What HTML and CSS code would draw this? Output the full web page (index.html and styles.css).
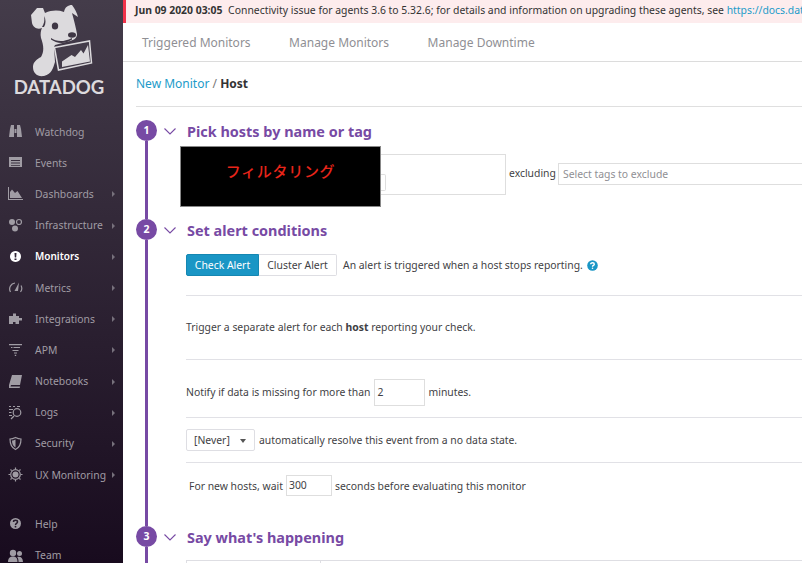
FILE: index.html
```html
<!DOCTYPE html>
<html lang="en">
<head>
    <meta charset="UTF-8">
    <title>New Monitor - Host</title>
    <link rel="stylesheet" href="styles.css">
</head>
<body>
    <aside class="sidebar">
        <div class="logo">
            <svg class="logo-dog" viewBox="0 0 130 78" width="130" height="78">
                <path class="dog" d="M31 15 L37 8 L43 8 L45 13 C52 10 58 10 64 12 C65 7 68 5 72 5 C75 9 77 13 78 17 L72 13 C74 20 76 28 77 34 C77 38 74 40 70 41 L55 45 L54 47 L55 62 C53 68 52 74 44 76 C37 77 33 73 33 67 C33 62 37 59 41 57 C44 52 44 46 41 38 C40 34 41 30 42 28 C37 30 33 27 32 23 Z"/>
                <path class="cut" d="M44 16 C45 20 44 24 42 27 L44 27 C46 24 46 19 44 16 Z"/>
                <path class="cut" d="M51 38 C56 41 62 43 72 38 L72 39.500 C64 45 56 43 51 39.500 Z"/>
                <ellipse class="cut" cx="55" cy="26" rx="3.200" ry="3.600"/>
                <ellipse class="cut" cx="72" cy="35" rx="4" ry="2.800"/>
                <path class="frame" d="M54.500 47.500 L89.500 41 L91.500 63 L58.500 70 Z"/>
                <path class="dog" d="M62 61.500 L71.500 55 L75 57 L81 50 L83.500 53.500 L88 45 L90 61.500 L62 67 Z"/>
            </svg>
            <div class="logo-name">DATADOG</div>
        </div>
        <nav class="nav">
            <a class="nav-item">
                <svg class="nav-icon" viewBox="0 0 15 15"><path d="M1 13 L2 5 L3 1 H6 V13 Z M9 13 V1 H12 L13 5 L14 13 Z M6.500 5 H8.500 V9 H6.500 Z"/></svg>
                <span>Watchdog</span>
            </a>
            <a class="nav-item">
                <svg class="nav-icon" viewBox="0 0 15 15"><path fill-rule="evenodd" d="M1 2 H14 V12 H1 Z M3 5 V6 H12 V5 Z M3 7.500 V8.500 H12 V7.500 Z M3 10 V10.800 H12 V10 Z"/></svg>
                <span>Events</span>
            </a>
            <a class="nav-item has-sub">
                <svg class="nav-icon" viewBox="0 0 15 15"><path d="M1 1 V13 H15 V14 H0 V1 Z M2 12 V6 L4 3.500 L7 7 L9.500 5 L14 12 Z"/></svg>
                <span>Dashboards</span>
            </a>
            <a class="nav-item has-sub">
                <svg class="nav-icon" viewBox="0 0 15 15"><circle cx="4" cy="4" r="3"/><circle cx="7" cy="10.500" r="3"/><circle class="ring" cx="11" cy="4" r="2.500"/></svg>
                <span>Infrastructure</span>
            </a>
            <a class="nav-item has-sub active">
                <svg class="nav-icon" viewBox="0 0 15 15"><path fill-rule="evenodd" d="M7.500 2 A5.500 5.500 0 1 1 7.499 2 Z M6.500 4 L6.800 8.500 H8.200 L8.500 4 Z M6.500 9.500 V11 H8.500 V9.500 Z"/></svg>
                <span>Monitors</span>
            </a>
            <a class="nav-item has-sub">
                <svg class="nav-icon" viewBox="0 0 15 15"><path class="line" d="M2.500 12 A6 6 0 0 1 7 3 M13 5.500 A6 6 0 0 1 12.500 12"/><path d="M11 2.500 L10 11 H6.500 Z"/></svg>
                <span>Metrics</span>
            </a>
            <a class="nav-item has-sub">
                <svg class="nav-icon" viewBox="0 0 15 15"><path d="M1 5 H5 V2.500 H8 V5 H11 V7 H14 V9.500 H11 V13 H7.500 V11 H5 V13 H1 Z"/></svg>
                <span>Integrations</span>
            </a>
            <a class="nav-item has-sub">
                <svg class="nav-icon" viewBox="0 0 15 15"><path d="M1 2 H14 V3.200 H1 Z M3 5 H4.500 V6 H3 Z M5.500 5 H12 V6 H5.500 Z M4.500 8 H10.500 V9 H4.500 Z M6 10.500 H9 V11.500 H6 Z M6.800 12.800 H8.200 V14 H6.800 Z"/></svg>
                <span>APM</span>
            </a>
            <a class="nav-item has-sub">
                <svg class="nav-icon" viewBox="0 0 15 15"><path d="M4 1 H14 L12 11 H3 L2.500 12.500 H12 L11.700 14 H1 L1 11 Z"/></svg>
                <span>Notebooks</span>
            </a>
            <a class="nav-item has-sub">
                <svg class="nav-icon" viewBox="0 0 15 15"><path class="line" d="M1 1.500 H3 M5 1.500 H7 M9 1.500 H12 M1 4.500 H5 M1 7.500 H3.500 M1 10.500 H4"/><circle class="ring" cx="9" cy="7.500" r="3.800"/><path class="line" d="M6 11 L3 14"/></svg>
                <span>Logs</span>
            </a>
            <a class="nav-item has-sub">
                <svg class="nav-icon" viewBox="0 0 15 15"><path class="line" d="M7.500 1.500 C9.500 2.500 11 3 13 3 C13 8 12 11.500 7.500 13.500 C3 11.500 2 8 2 3 C4 3 5.500 2.500 7.500 1.500 Z"/><path d="M7.500 3.500 V11.500 C5 10 4 8 4 4.500 C5.500 4.500 6.500 4 7.500 3.500 Z"/></svg>
                <span>Security</span>
            </a>
            <a class="nav-item has-sub">
                <svg class="nav-icon" viewBox="0 0 15 15"><circle cx="7.500" cy="7.500" r="3"/><circle class="ring" cx="7.500" cy="7.500" r="4.800"/><path class="line" d="M7.500 0.500 V2 M7.500 13 V14.500 M0.500 7.500 H2 M13 7.500 H14.500 M2.500 2.500 L3.700 3.700 M11.300 11.300 L12.500 12.500 M12.500 2.500 L11.300 3.700 M3.700 11.300 L2.500 12.500"/></svg>
                <span>UX Monitoring</span>
            </a>
        </nav>
        <nav class="nav nav-bottom">
            <a class="nav-item">
                <svg class="nav-icon" viewBox="0 0 15 15"><circle cx="7.500" cy="7.500" r="5.500"/><path class="hole" d="M5.500 6 C5.500 3.800 9.500 3.800 9.500 6 C9.500 7.500 7.500 7.300 7.500 9"/><circle class="dot" cx="7.500" cy="10.700" r="0.900"/></svg>
                <span>Help</span>
            </a>
            <a class="nav-item">
                <svg class="nav-icon" viewBox="0 0 15 15"><circle cx="5" cy="5" r="3.200"/><path d="M0 14 C0 10 2 8.500 5 8.500 C8 8.500 9.500 10 9.500 14 Z"/><circle cx="11.500" cy="5.500" r="2.500"/><path d="M10.500 14 C10.500 11.500 10 10 9 9 C12 7.800 15 9.500 15 14 Z"/></svg>
                <span>Team</span>
            </a>
        </nav>
    </aside>

    <main class="main">
        <div class="banner">
            <b>Jun 09 2020 03:05</b>
            Connectivity issue for agents 3.6 to 5.32.6; for details and information on upgrading these agents, see
            <a>https://docs.datadoghq.com/agent/</a>
        </div>

        <div class="tabs">
            <a>Triggered Monitors</a>
            <a>Manage Monitors</a>
            <a>Manage Downtime</a>
        </div>

        <div class="crumbs">
            <a>New Monitor</a> <span class="slash">/</span> <b>Host</b>
        </div>

        <section class="step step-pick">
            <div class="rail"><div class="num">1</div></div>
            <div class="step-main">
                <h2 class="step-head">
                    <svg class="chevron" viewBox="0 0 12 7"><path d="M0.500 0.500 L6 6 L11.500 0.500"/></svg>
                    Pick hosts by name or tag
                </h2>
                <div class="pick-row">
                    <div class="pick-box"><span class="pick-tag"></span></div>
                    <span class="excluding">excluding</span>
                    <div class="exclude-input">Select tags to exclude</div>
                </div>
            </div>
        </section>

        <section class="step">
            <div class="rail"><div class="num">2</div></div>
            <div class="step-main">
                <h2 class="step-head">
                    <svg class="chevron" viewBox="0 0 12 7"><path d="M0.500 0.500 L6 6 L11.500 0.500"/></svg>
                    Set alert conditions
                </h2>
                <div class="row row-alert">
                    <div class="btn-group">
                        <button class="btn btn-on">Check Alert</button>
                        <button class="btn">Cluster Alert</button>
                    </div>
                    <span>An alert is triggered when a host stops reporting.</span>
                    <svg class="help" viewBox="0 0 11 11"><circle cx="5.500" cy="5.500" r="5.300"/><path d="M3.700 4.300 C3.700 2.300 7.300 2.300 7.300 4.300 C7.300 5.500 5.500 5.400 5.500 6.700"/><circle class="help-dot" cx="5.500" cy="8.300" r="0.800"/></svg>
                </div>
                <div class="row row-trigger">
                    <span>Trigger a separate alert for each <b>host</b> reporting your check.</span>
                </div>
                <div class="row row-notify">
                    <span>Notify if data is missing for more than</span>
                    <div class="num-input num-input-big">2</div>
                    <span>minutes.</span>
                </div>
                <div class="row row-resolve">
                    <div class="select">[Never]<i class="select-caret"></i></div>
                    <span>automatically resolve this event from a no data state.</span>
                </div>
                <div class="row row-wait">
                    <span>For new hosts, wait</span>
                    <div class="num-input">300</div>
                    <span>seconds before evaluating this monitor</span>
                </div>
            </div>
        </section>

        <section class="step">
            <div class="rail"><div class="num">3</div></div>
            <div class="step-main">
                <h2 class="step-head">
                    <svg class="chevron" viewBox="0 0 12 7"><path d="M0.500 0.500 L6 6 L11.500 0.500"/></svg>
                    Say what's happening
                </h2>
                <div class="say-box"><div class="say-tab"></div></div>
            </div>
        </section>

        <div class="redact">フィルタリング</div>
    </main>
</body>
</html>
```

FILE: styles.css
```css
* {
    margin: 0;
    padding: 0;
    box-sizing: border-box;
}

body {
    height: 563px;
    display: flex;
    overflow: hidden;
    font-family: 'Noto Sans', sans-serif;
    font-size: 10.4px;
    color: #3f3f45;
    background: #fff;
}

/* sidebar */
.sidebar {
    width: 123px;
    flex-shrink: 0;
    height: 563px;
    overflow: hidden;
    background: linear-gradient(180deg, #443c4a, #180b1e);
}

.logo {
    height: 116px;
}

.logo-dog {
    display: block;
}

.dog {
    fill: #dcdadd;
}

.cut {
    fill: #3f3745;
}

.frame {
    fill: #443c4a;
    stroke: #dcdadd;
    stroke-width: 1.5;
}

.logo-name {
    font-family: 'Lato', sans-serif;
    font-size: 18.6px;
    font-weight: 700;
    line-height: 18px;
    text-align: center;
    color: #dcdadd;
    width: 118px;
}

.nav-item {
    height: 31.2px;
    display: flex;
    align-items: center;
    gap: 12px;
    padding-left: 8px;
    position: relative;
    color: #a09ca4;
    white-space: nowrap;
}

.nav-icon {
    width: 15px;
    height: 15px;
    flex-shrink: 0;
    fill: #a09ca4;
}

.nav-icon .ring,
.nav-icon .line {
    fill: none;
    stroke: #a09ca4;
    stroke-width: 1.2;
}

.nav-icon .hole {
    fill: none;
    stroke: #241929;
    stroke-width: 1.5;
}

.nav-icon .dot {
    fill: #241929;
}

.nav-item.active {
    color: #fff;
    font-size: 10px;
    font-weight: 600;
}

.nav-item.active .nav-icon {
    fill: #fff;
}

.has-sub::after {
    content: "";
    position: absolute;
    left: 112px;
    top: 13px;
    border-left: 3px solid #77717c;
    border-top: 3px solid transparent;
    border-bottom: 3px solid transparent;
}

.nav-bottom {
    margin-top: 18px;
}

/* main column */
.main {
    flex: 1;
    min-width: 0;
    position: relative;
    overflow: hidden;
}

.banner {
    height: 23px;
    line-height: 21px;
    padding-left: 9px;
    border-left: 3px solid #f0324a;
    background: #fdeced;
    color: #333;
    white-space: nowrap;
    overflow: hidden;
}

.banner b {
    margin-right: 3px;
}

.banner a {
    color: #1c9bc9;
}

.tabs {
    height: 39px;
    display: flex;
    align-items: center;
    gap: 38.5px;
    padding-left: 19px;
    border-bottom: 1px solid #dcdcdc;
    font-size: 12px;
    color: #8f8f94;
}

.crumbs {
    height: 45px;
    line-height: 43px;
    margin-left: 13px;
    border-bottom: 1px solid #dfdfdf;
    font-size: 12px;
}

.crumbs a {
    color: #1c9bc9;
}

.crumbs .slash {
    color: #777;
}

.crumbs b {
    color: #333;
}

/* steps */
.step {
    display: grid;
    grid-template-columns: 21px 1fr;
    column-gap: 7px;
    margin-left: 13px;
}

.step-pick {
    margin-top: 13px;
}

.rail {
    display: flex;
    flex-direction: column;
    align-items: center;
}

.rail::after {
    content: "";
    flex: 1;
    width: 3px;
    background: #774aa4;
}

.num {
    width: 21px;
    height: 21px;
    flex-shrink: 0;
    border-radius: 50%;
    background: #774aa4;
    color: #fff;
    font-size: 10.5px;
    font-weight: 700;
    line-height: 21px;
    text-align: center;
}

.step-main {
    min-width: 0;
}

.step-head {
    height: 22px;
    display: flex;
    align-items: center;
    gap: 11px;
    font-size: 14.45px;
    font-weight: 700;
    color: #774aa4;
    white-space: nowrap;
}

.chevron {
    width: 12px;
    height: 7px;
    fill: none;
    stroke: #774aa4;
    stroke-width: 1.1;
}

.pick-row {
    display: flex;
    align-items: center;
    margin: 12px 0 24px 22px;
    white-space: nowrap;
}

.pick-box {
    width: 320px;
    height: 41px;
    flex-shrink: 0;
    border: 1px solid #dedede;
    padding: 19px 0 0 190px;
}

.pick-tag {
    display: block;
    width: 9px;
    height: 17px;
    border: 1px solid #dedede;
    border-left: 0;
    border-radius: 0 2px 2px 0;
}

.excluding {
    margin: 0 2px 3px 3px;
}

.exclude-input {
    width: 300px;
    height: 22px;
    flex-shrink: 0;
    margin-bottom: 1px;
    border: 1px solid #dedede;
    line-height: 20px;
    padding-left: 4px;
    color: #8f8f94;
}

.row {
    display: flex;
    align-items: center;
    margin-left: 22px;
    border-bottom: 1px solid #e1e1e6;
    white-space: nowrap;
}

.row-alert {
    margin-top: 13px;
    padding-bottom: 19px;
    gap: 6px;
}

.btn-group {
    display: flex;
}

.btn {
    height: 22px;
    width: 78px;
    font: inherit;
    color: #3f3f45;
    background: #fff;
    border: 1px solid #dedee3;
    border-left: 0;
    border-radius: 0 2px 2px 0;
}

.btn-on {
    width: 73px;
    background: #1a96c5;
    border: 1px solid #1587b2;
    border-radius: 2px 0 0 2px;
    color: #fff;
}

.help {
    width: 11px;
    height: 11px;
    margin-left: -2px;
    fill: none;
}

.help circle {
    fill: #1a96c5;
}

.help path {
    stroke: #fff;
    stroke-width: 1.4;
}

.help .help-dot {
    fill: #fff;
}

.row-trigger {
    height: 64px;
    padding-bottom: 2px;
}

.row-notify {
    padding: 19px 0 11px;
    gap: 3px;
}

.row-notify span {
    margin-bottom: 2px;
}

.num-input {
    width: 46px;
    height: 21px;
    border: 1px solid #dedede;
    line-height: 19px;
    padding-left: 2px;
    margin: 0 1px;
}

.num-input-big {
    width: 51px;
    height: 27px;
    line-height: 25px;
    margin-right: 0;
}

.row-resolve {
    padding: 11px 0;
    gap: 4px;
}

.select {
    width: 69px;
    height: 22px;
    line-height: 20px;
    padding-left: 7px;
    border: 1px solid #dedee3;
    border-radius: 2px;
    position: relative;
}

.select-caret {
    position: absolute;
    right: 8px;
    top: 9px;
    border-top: 4px solid #555;
    border-left: 3.500px solid transparent;
    border-right: 3.500px solid transparent;
}

.row-wait {
    padding: 12px 0 30px 3px;
    border-bottom: 0;
    gap: 2px;
}

.say-box {
    margin: 12px 0 0 22px;
    height: 20px;
    border-top: 1px solid #dedee3;
}

.say-tab {
    width: 135px;
    height: 20px;
    border: 1px solid #dedee3;
    border-top: 0;
}

/* black box pasted over the host filter */
.redact {
    position: absolute;
    left: 57px;
    top: 146px;
    width: 201px;
    height: 61px;
    background: #000;
    border: 1px solid #888;
    color: #e8251a;
    font-family: 'Noto Sans CJK JP', sans-serif;
    font-size: 15px;
    font-weight: 500;
    letter-spacing: 0.7px;
    line-height: 47px;
    text-align: center;
}
```
